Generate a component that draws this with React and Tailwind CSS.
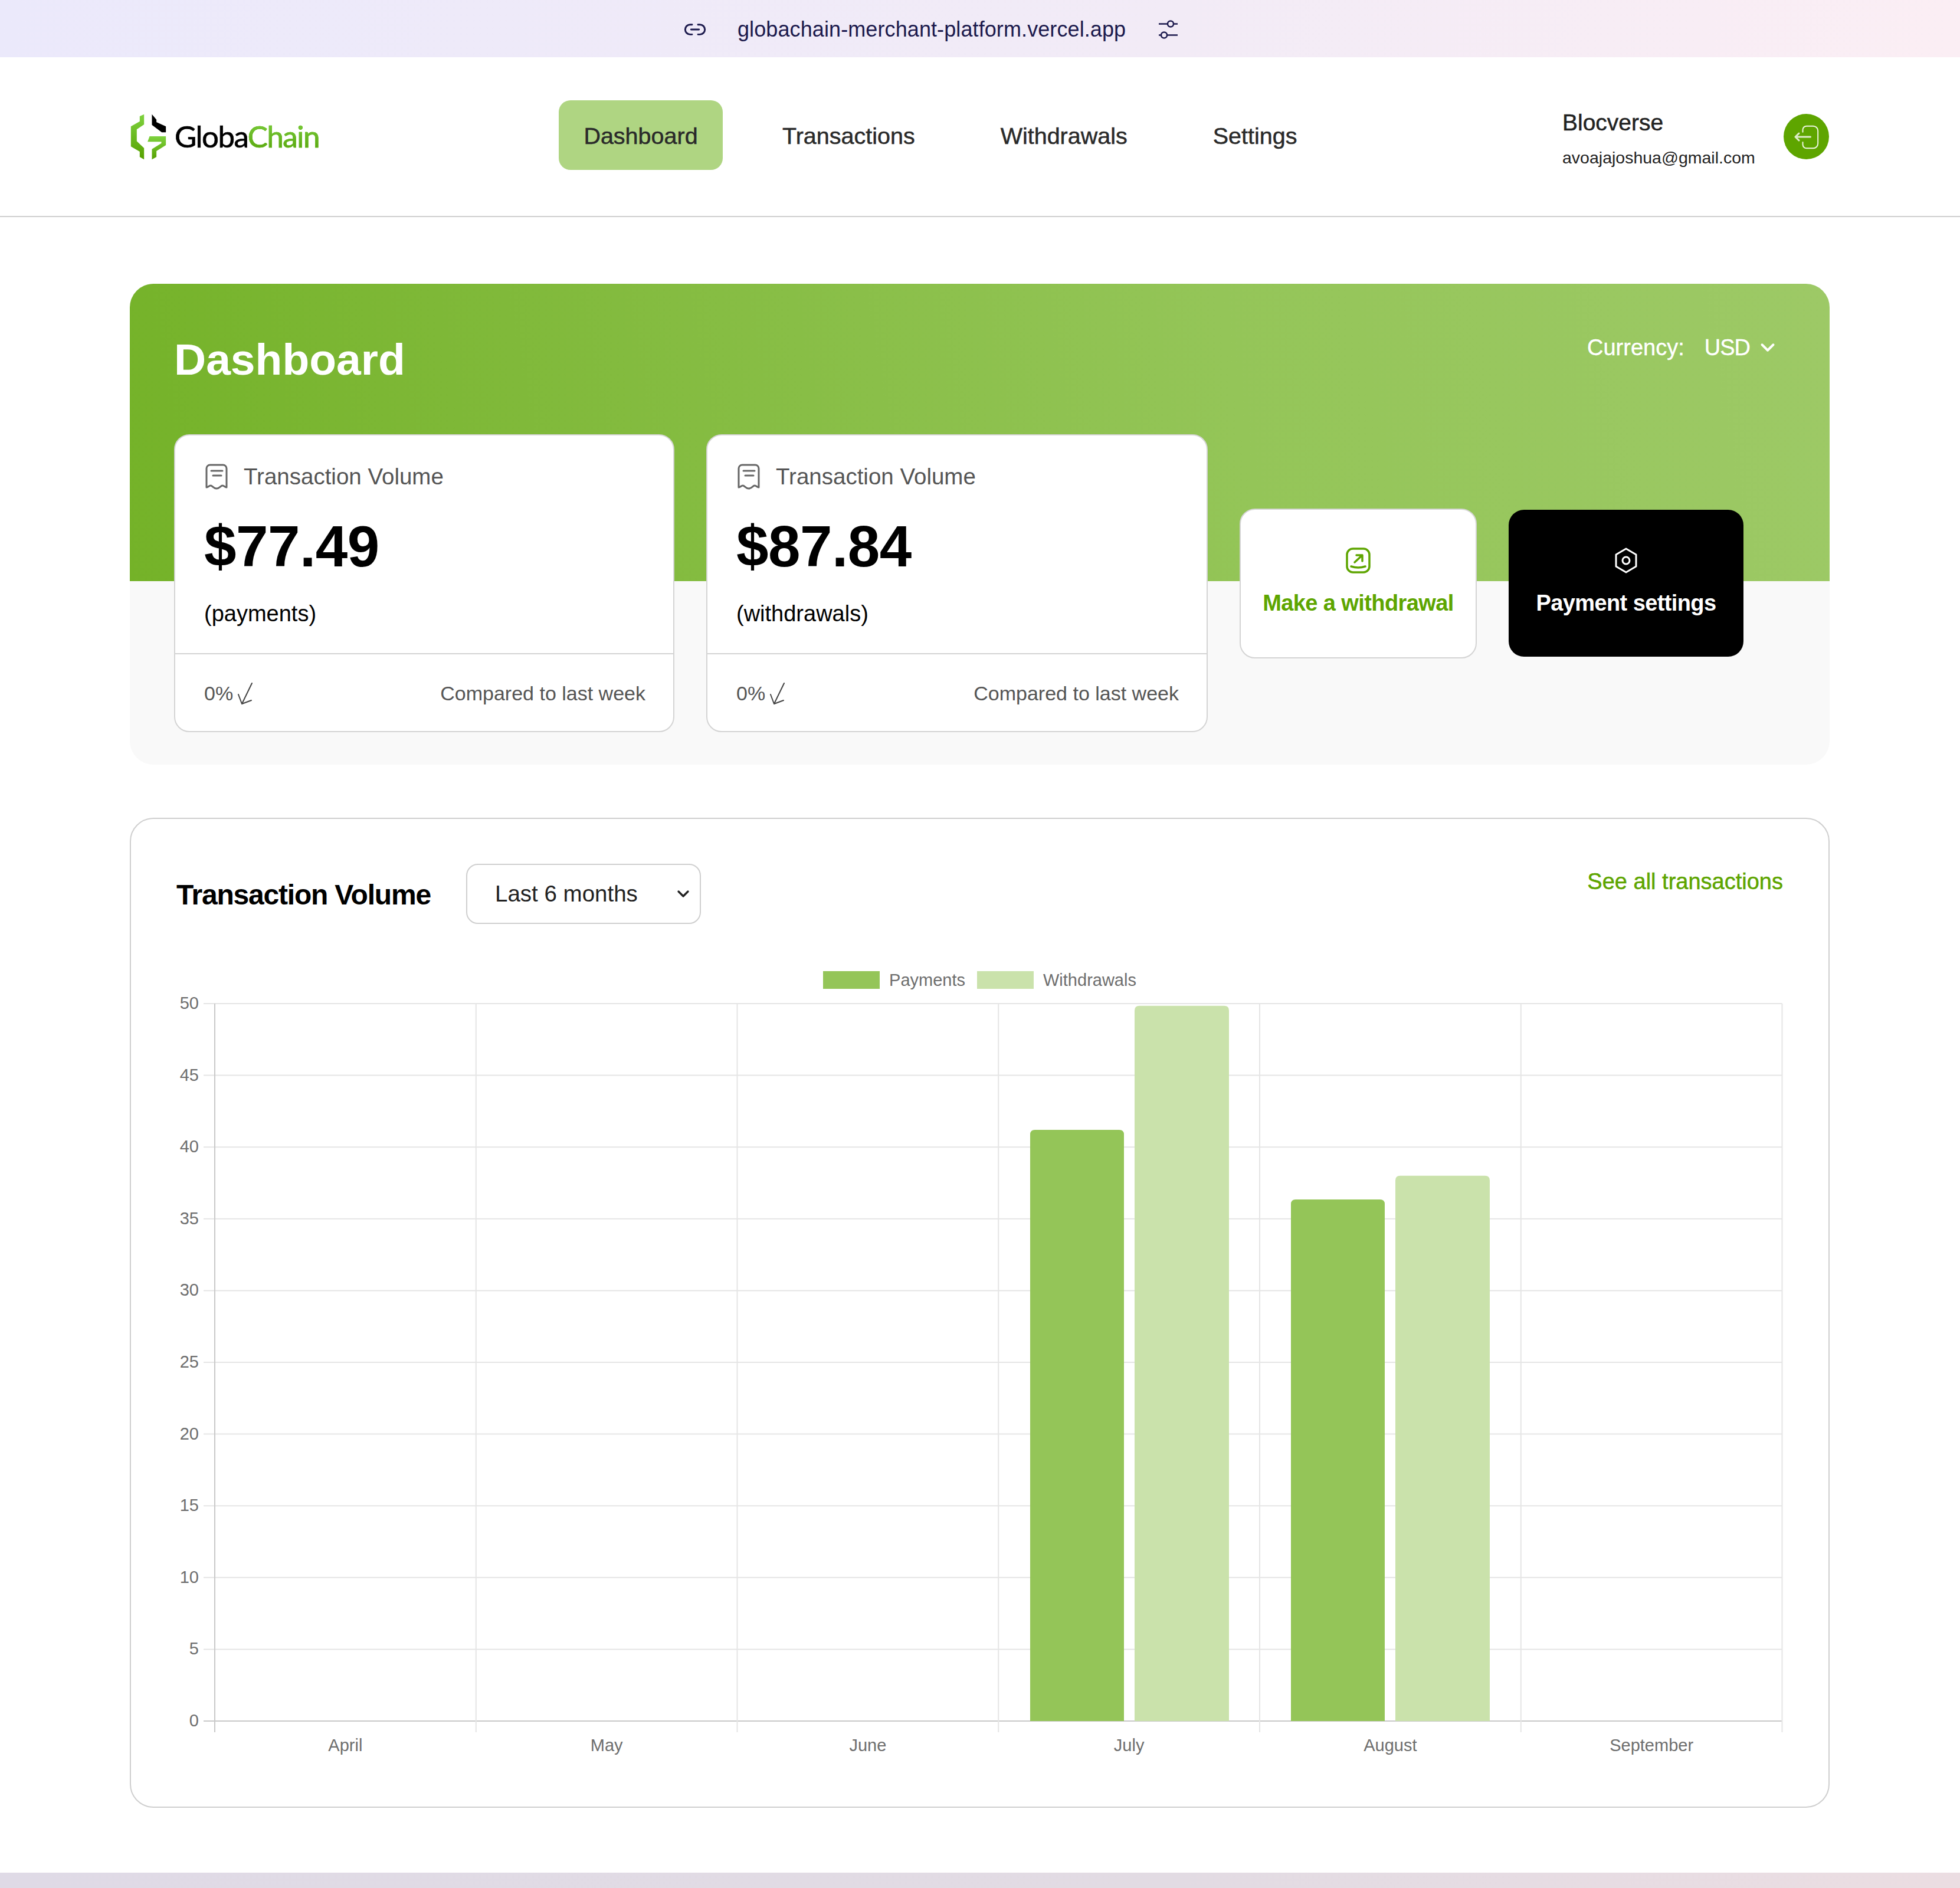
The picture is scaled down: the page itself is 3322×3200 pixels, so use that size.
import React from 'react';
import { Link2, ChevronDown } from 'lucide-react';

const navItems = ['Transactions', 'Withdrawals', 'Settings'];
const months = ['April', 'May', 'June', 'July', 'August', 'September'];
const ticks = [50, 45, 40, 35, 30, 25, 20, 15, 10, 5, 0];

const Logo = () => (
  <div className="flex items-end">
    <svg width="63" height="78" viewBox="62 66 184 234">
      <defs>
        <linearGradient id="logoGreen" x1="0" y1="0" x2="0" y2="1">
          <stop offset="0" stopColor="#7ed23f" />
          <stop offset="1" stopColor="#56a000" />
        </linearGradient>
      </defs>
      <path fill="url(#logoGreen)" d="M132 68V120L95 145V205L132 240V298L110 285V258L65 232V130L110 104V78Z" />
      <path fill="#000" d="M172 68L195 95V108L243 130V160H222L172 122Z" />
      <path fill="url(#logoGreen)" d="M160 180H243V225L195 255V285L172 298V245L220 215V208H150Z" />
    </svg>
    <div className="ml-[13px] mb-[15px] text-[51px] leading-[50px] tracking-[-1.5px] font-['Lato',sans-serif]">
      <span className="text-black [-webkit-text-stroke:0.7px_#000]">Globa</span>
      <span className="bg-linear-to-b from-[#7ed23f] to-[#56a000] bg-clip-text text-transparent [-webkit-text-stroke:0.7px_#68bd20]">Chain</span>
    </div>
  </div>
);

const ReceiptIcon = () => (
  <svg width="38" height="44" viewBox="0 0 38 44" fill="none" stroke="#666" strokeWidth="3" strokeLinecap="round" strokeLinejoin="round" className="shrink-0">
    <path d="M2 40V8a6 6 0 0 1 6-6h22a6 6 0 0 1 6 6v32c-3 0-4-3-7-3s-5 5-10 5-7-5-10-5-4 3-7 3Z" />
    <path d="M10 12h19M13 20h14" />
  </svg>
);

const DownArrow = () => (
  <svg width="28" height="38" viewBox="0 0 28 38" fill="none" stroke="#444" strokeWidth="2" strokeLinecap="round" strokeLinejoin="round">
    <path d="M26 1L9 36M3 20l6 16 16-6" />
  </svg>
);

const StatCard = ({ amount, label, className }) => (
  <div className={`h-[505px] shrink-0 flex flex-col rounded-[26px] border-2 border-[#d4d4d4] bg-white ${className}`}>
    <div className="flex-1 pl-[51px] pt-[48px]">
      <div className="flex items-center gap-[27px] text-[38.5px] leading-[44px] text-[#555]">
        <ReceiptIcon />
        Transaction Volume
      </div>
      <div className="mt-[41px] -ml-[2px] text-[98px] leading-[110px] font-bold tracking-[-0.5px] text-black">{amount}</div>
      <div className="mt-[36px] -ml-[2px] text-[38px] leading-[46px] text-black">{label}</div>
    </div>
    <div className="h-[132px] shrink-0 flex items-center justify-between border-t-2 border-[#d4d4d4] pl-[49px] pr-[47px] pt-[3px] text-[34px] text-[#555]">
      <div className="flex items-center gap-[6px]">
        0%
        <DownArrow />
      </div>
      <div>Compared to last week</div>
    </div>
  </div>
);

const Chart = () => {
  // plot area in page pixels, offset from the svg's own corner
  const left = 65;
  const top = 25;
  const bottom = 1241;
  const colWidth = 442.75;
  const plotWidth = colWidth * 6;
  const unit = 24.32;
  const bars = [
    { x: 1447, w: 159, v: 41.2, fill: '#94c558' },
    { x: 1624, w: 160, v: 49.85, fill: '#cae2ab' },
    { x: 1889, w: 159, v: 36.35, fill: '#94c558' },
    { x: 2066, w: 160, v: 38, fill: '#cae2ab' },
  ];
  return (
    <svg width="2724" height="1320" viewBox="0 0 2724 1320" className="block font-['Liberation_Sans',sans-serif]">
      {ticks.map((t) => {
        const y = bottom - t * unit;
        return (
          <g key={t}>
            <line x1={left - 19} x2={left + plotWidth} y1={y} y2={y} stroke={t === 0 ? '#c9c9c9' : '#e5e5e5'} strokeWidth="2" />
            <text x={left - 27} y={y + 9} textAnchor="end" fontSize="29" fill="#6e6e6e">{t}</text>
          </g>
        );
      })}
      {months.map((m, i) => (
        <g key={m}>
          <line x1={left + i * colWidth} x2={left + i * colWidth} y1={top} y2={bottom + 19} stroke={i === 0 ? '#c9c9c9' : '#e5e5e5'} strokeWidth="2" />
          <text x={left + (i + 0.5) * colWidth} y={bottom + 51} textAnchor="middle" fontSize="29" fill="#6e6e6e">{m}</text>
        </g>
      ))}
      <line x1={left + plotWidth} x2={left + plotWidth} y1={top} y2={bottom + 19} stroke="#e5e5e5" strokeWidth="2" />
      {bars.map((b) => {
        const y = bottom - b.v * unit;
        return (
          <path key={b.x} fill={b.fill} d={`M${b.x} ${bottom}V${y + 8}q0-8 8-8H${b.x + b.w - 8}q8 0 8 8V${bottom}Z`} />
        );
      })}
    </svg>
  );
};

export default function App() {
  return (
    <div className="w-[3322px] h-[3200px] flex flex-col overflow-hidden bg-white font-['Liberation_Sans',sans-serif]">
      <div className="h-[97px] shrink-0 flex items-center bg-[linear-gradient(100deg,#ebe9fb,#f2ebf6_60%,#fbeef4)] pl-[1158px] pt-[3px] text-[#1c1a4d]">
        <Link2 size={40} strokeWidth={1.75} />
        <span className="ml-[52px] text-[36px] leading-none tracking-[0.1px]">globachain-merchant-platform.vercel.app</span>
        <svg width="36" height="36" viewBox="0 0 36 36" fill="none" stroke="currentColor" strokeWidth="2.5" className="ml-[54px]">
          <path d="M2 8.500h15M27 8.500h7M2 27.500h4M16 27.500h18" />
          <circle cx="22" cy="8.500" r="5" />
          <circle cx="11" cy="27.500" r="5" />
        </svg>
      </div>

      <header className="h-[271px] shrink-0 flex items-center border-b-2 border-[#cfcfcf] pl-[220px] pr-[222px]">
        <div className="w-[727px]"><Logo /></div>
        <nav className="mb-[5px] flex items-center text-[39.5px] text-[#2a2a2a] [-webkit-text-stroke:0.5px_#2a2a2a]">
          <div className="flex h-[118px] w-[278px] items-center justify-center rounded-[20px] bg-[#afd582] pt-[3px]">Dashboard</div>
          <div className="ml-[101px] pt-[4px]">{navItems[0]}</div>
          <div className="ml-[145px] pt-[4px]">{navItems[1]}</div>
          <div className="ml-[145px] pt-[4px]">{navItems[2]}</div>
        </nav>
        <div className="ml-auto flex items-center">
          <div className="w-[375px] pt-[6px] text-[#222]">
            <div className="text-[39px] leading-[46px] [-webkit-text-stroke:0.5px_#222]">Blocverse</div>
            <div className="mt-[18px] text-[28.5px] leading-[36px]">avoajajoshua@gmail.com</div>
          </div>
          <div className="flex h-[77px] w-[77px] items-center justify-center rounded-full bg-[#5ea500]">
            <svg width="50" height="50" viewBox="0 0 50 50" fill="none" strokeLinecap="round" strokeLinejoin="round">
              <path stroke="#eef6e2" strokeWidth="2" d="M18.500 16.700V13a6.300 6.300 0 0 1 6.300-6.300h11.400a8 8 0 0 1 8 8v21.600a8 8 0 0 1-8 8H24.800a6.300 6.300 0 0 1-6.300-6.300v-4" />
              <path stroke="#dcebc8" strokeWidth="3" d="M31.500 25H6M12 19l-6 6 6 6" />
            </svg>
          </div>
        </div>
      </header>

      <main className="flex-1 pl-[220px] pr-[221px] pt-[113px]">
        <section className="rounded-[40px] bg-[#f9f9f9]">
          <div className="h-[504px] rounded-t-[40px] bg-[linear-gradient(80deg,#74b228,#94c558_65%,#9dc966)] pl-[75px] pr-[86px] pt-[78px]">
            <div className="flex items-start justify-between">
              <h1 className="text-[75px] leading-[100px] font-bold text-white">Dashboard</h1>
              <div className="mt-[8px] flex items-center text-[38px] leading-[44px] text-white [-webkit-text-stroke:0.4px_#fff]">
                <span>Currency:</span>
                <span className="ml-[34px] tracking-[-1px]">USD</span>
                <ChevronDown size={38} strokeWidth={2.5} className="ml-[11px]" />
              </div>
            </div>
            <div className="mt-[77px] flex items-center">
              <StatCard amount="$77.49" label="(payments)" className="w-[848px]" />
              <StatCard amount="$87.84" label="(withdrawals)" className="ml-[54px] w-[850px]" />
              <button className="ml-[54px] flex h-[254px] w-[402px] shrink-0 flex-col items-center justify-center rounded-[26px] border-2 border-[#d4d4d4] bg-white pb-[6px] text-[38px] font-bold tracking-[-0.6px] text-[#5ea500]">
                <svg width="42" height="44" viewBox="0 0 42 44" fill="none" stroke="currentColor" strokeWidth="3.5" strokeLinecap="round" strokeLinejoin="round">
                  <rect x="2" y="2" width="38" height="40" rx="10" />
                  <path d="M15 25L28 13M18 13h10v10M9 32q12 4 24 0" />
                </svg>
                <span className="mt-[28px] leading-[44px]">Make a withdrawal</span>
              </button>
              <button className="ml-[54px] flex h-[249px] w-[398px] shrink-0 flex-col items-center justify-center rounded-[26px] bg-black pb-[6px] text-[38px] font-bold tracking-[-0.6px] text-white">
                <svg width="44" height="44" viewBox="0 0 44 44" fill="none" stroke="currentColor" strokeWidth="3" strokeLinejoin="round">
                  <path d="M22 2L39 12V32L22 42L5 32V12Z" />
                  <circle cx="22" cy="22" r="6" />
                </svg>
                <span className="mt-[28px] leading-[44px]">Payment settings</span>
              </button>
            </div>
          </div>
          <div className="h-[311px]" />
        </section>

        <section className="mt-[90px] h-[1678px] rounded-[40px] border-2 border-[#cfcfcf] px-[77px] pt-[76px]">
          <div className="flex items-start justify-between">
            <div className="flex items-center">
              <h2 className="w-[491px] pt-[4px] text-[48px] leading-[98px] font-bold tracking-[-1.2px] text-black">Transaction Volume</h2>
              <div className="flex h-[102px] w-[398px] items-center justify-between rounded-[20px] border-2 border-[#cfcfcf] pl-[47px] pr-[12px] text-[38.5px] text-[#222]">
                Last 6 months
                <ChevronDown size={32} strokeWidth={2.5} />
              </div>
            </div>
            <div className="mt-[7px] text-[38px] leading-[46px] text-[#5ea500] [-webkit-text-stroke:0.5px_#5ea500]">See all transactions</div>
          </div>
          <div className="mt-[80px] flex items-center justify-center gap-[16px] text-[29px] leading-[30px] text-[#6e6e6e]">
            <div className="h-[30px] w-[96px] bg-[#94c558]" />
            <span>Payments</span>
            <div className="ml-[4px] h-[30px] w-[96px] bg-[#cae2ab]" />
            <span>Withdrawals</span>
          </div>
          <Chart />
        </section>
      </main>

      <div className="h-[26px] shrink-0 bg-[linear-gradient(100deg,#dfdae6,#e2dbe3_60%,#ebdde2)]" />
    </div>
  );
}
